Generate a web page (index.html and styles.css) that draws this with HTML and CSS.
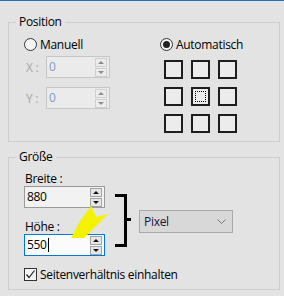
FILE: index.html
```html
<!DOCTYPE html>
<html lang="de">
<head>
    <meta charset="UTF-8">
    <title>Bildgröße</title>
    <link rel="stylesheet" href="styles.css">
</head>
<body>
    <div class="topline"></div>

    <fieldset class="group position">
        <legend>Position</legend>
        <div class="pos-body">
            <div class="pos-left">
                <div class="radio"><span class="radio-dot"></span>Manuell</div>
                <div class="field">
                    <span class="field-label disabled">X :</span>
                    <div class="spinbox disabled">
                        <span class="spin-value">0</span>
                        <span class="spin-buttons"><span class="spin-btn"><i class="up"></i></span><span class="spin-btn"><i class="down"></i></span></span>
                    </div>
                </div>
                <div class="field field-y">
                    <span class="field-label disabled">Y :</span>
                    <div class="spinbox disabled">
                        <span class="spin-value">0</span>
                        <span class="spin-buttons"><span class="spin-btn"><i class="up"></i></span><span class="spin-btn"><i class="down"></i></span></span>
                    </div>
                </div>
            </div>
            <div class="pos-right">
                <div class="radio"><span class="radio-dot checked"></span>Automatisch</div>
                <div class="anchor-grid">
                    <span class="cell"></span><span class="cell"></span><span class="cell"></span>
                    <span class="cell"></span><span class="cell active"></span><span class="cell"></span>
                    <span class="cell"></span><span class="cell"></span><span class="cell"></span>
                </div>
            </div>
        </div>
    </fieldset>

    <fieldset class="group size">
        <legend>Größe</legend>
        <div class="size-body">
            <div class="size-row">
                <div class="size-inputs">
                    <div class="size-label">Breite :</div>
                    <div class="spinbox wide">
                        <span class="spin-value">880</span>
                        <span class="spin-buttons"><span class="spin-btn"><i class="up"></i></span><span class="spin-btn"><i class="down"></i></span></span>
                    </div>
                    <div class="size-label label-h">Höhe :</div>
                    <div class="spinbox wide focused">
                        <span class="spin-value">550<span class="caret"></span></span>
                        <span class="spin-buttons"><span class="spin-btn"><i class="up"></i></span><span class="spin-btn"><i class="down"></i></span></span>
                    </div>
                </div>
                <svg class="bracket" width="17" height="53" viewBox="0 0 17 53">
                    <path d="M0 1.5 H10.5 V51.5 H0 M10.5 25.5 H16" fill="none" stroke="#000" stroke-width="3"/>
                </svg>
                <div class="combo">
                    <span>Pixel</span>
                    <svg width="9" height="6" viewBox="0 0 9 6"><path d="M0.5 0.5 L4.5 4.5 L8.5 0.5" fill="none" stroke="#777" stroke-width="1"/></svg>
                </div>
            </div>
            <div class="check">
                <span class="check-box">
                    <svg width="11" height="11" viewBox="0 0 11 11"><path d="M1.5 5.5 L4 8.5 L9.5 1.5" fill="none" stroke="#222" stroke-width="1.2"/></svg>
                </span>
                Seitenverhältnis einhalten
            </div>
        </div>
    </fieldset>

    <svg class="pointer" width="39" height="35" viewBox="0 0 39 35">
        <polygon points="1,33 10,16 21,1 26,12 38,9 14,33" fill="#f5f200"/>
    </svg>
</body>
</html>
```

FILE: styles.css
```css
body {
    margin: 0;
    position: relative;
    background: #e3e3e3;
    font-family: "Open Sans", "Noto Sans", sans-serif;
    font-size: 12px;
    letter-spacing: -0.3px;
    color: #000;
}
.topline {
    height: 1px;
    background: #2e6bb0;
}
.group {
    box-sizing: border-box;
    margin: 13px 4px 0 8px;
    padding: 0;
    min-width: 0;
    border: 1px solid #cdcdcd;
}
.group legend {
    margin-left: 7px;
    padding: 0 3px;
    line-height: 16px;
}
.position {
    height: 128px;
}
.size {
    margin-top: 7px;
    height: 141px;
}

/* Position */
.pos-body {
    display: grid;
    grid-template-columns: 136px auto;
    padding: 7px 0 0 15px;
}
.radio {
    display: flex;
    align-items: center;
    gap: 3px;
    height: 14px;
}
.radio-dot {
    box-sizing: border-box;
    width: 13px;
    height: 13px;
    border: 1px solid #333;
    border-radius: 50%;
    background: #f4f4f4;
    position: relative;
}
.radio-dot.checked::after {
    content: "";
    position: absolute;
    left: 2px;
    top: 2px;
    width: 7px;
    height: 7px;
    border-radius: 50%;
    background: #222;
}
.field {
    display: flex;
    align-items: center;
    margin-top: 5px;
}
.field-y {
    margin-top: 9px;
}
.field-label {
    width: 20px;
    padding-left: 2px;
}
.disabled {
    color: #a6a6a6;
}
.anchor-grid {
    display: grid;
    grid-template-columns: repeat(3, 19px);
    grid-auto-rows: 19px;
    gap: 8px;
    margin: 9px 0 0 4px;
}
.cell {
    box-sizing: border-box;
    border: 2px solid #1e1e1e;
    background: #ececec;
    position: relative;
}
.cell.active::after {
    content: "";
    position: absolute;
    inset: 2px;
    border: 1px dotted #000;
}

/* spin boxes */
.spinbox {
    box-sizing: border-box;
    display: flex;
    width: 64px;
    height: 22px;
    border: 1px solid #9a9a9a;
    background: #f2f2f2;
}
.spinbox.wide {
    width: 81px;
}
.spinbox.focused {
    border-color: #0078d7;
    background: #fbfbfb;
}
.spinbox.disabled {
    border-color: #c6c6c6;
    background: #ebebeb;
}
.spin-value {
    flex: 1;
    padding-left: 2px;
    line-height: 20px;
    display: flex;
    align-items: center;
}
.spinbox.disabled .spin-value {
    color: #7f9cc4;
}
.caret {
    width: 1px;
    height: 14px;
    margin-left: 1px;
    background: #000;
}
.spin-buttons {
    display: flex;
    flex-direction: column;
    gap: 1px;
    padding: 1px 2px 0 0;
}
.spin-btn {
    box-sizing: border-box;
    width: 12px;
    height: 9px;
    border: 1px solid #a3a3a3;
    background: #e6e6e6;
    display: flex;
    align-items: center;
    justify-content: center;
}
.spinbox.disabled .spin-btn {
    border-color: #cfcfcf;
    background: #ececec;
}
.spin-btn i {
    width: 0;
    height: 0;
    border-left: 3px solid transparent;
    border-right: 3px solid transparent;
}
.spin-btn .up {
    border-bottom: 3px solid #111;
}
.spin-btn .down {
    border-top: 3px solid #111;
}
.spinbox.disabled .up {
    border-bottom-color: #8c8c8c;
}
.spinbox.disabled .down {
    border-top-color: #8c8c8c;
}

/* Größe */
.size-body {
    padding: 6px 0 0 15px;
}
.size-row {
    display: flex;
}
.size-label {
    line-height: 15px;
    padding-left: 1px;
}
.label-h {
    margin-top: 11px;
}
.bracket {
    align-self: flex-end;
    margin: 0 0 9px 10px;
}
.combo {
    box-sizing: border-box;
    align-self: flex-end;
    display: flex;
    align-items: center;
    justify-content: space-between;
    width: 94px;
    height: 23px;
    margin: 0 0 23px 7px;
    padding: 0 6px 0 4px;
    border: 1px solid #a9a9a9;
    background: #d8d8d8;
    color: #1a1440;
}
.check {
    display: flex;
    align-items: center;
    gap: 3px;
    margin-top: 12px;
    height: 13px;
}
.check-box {
    box-sizing: border-box;
    width: 13px;
    height: 13px;
    border: 1px solid #333;
    background: #f4f4f4;
    display: flex;
}

.pointer {
    position: absolute;
    left: 70px;
    top: 205px;
}
```
